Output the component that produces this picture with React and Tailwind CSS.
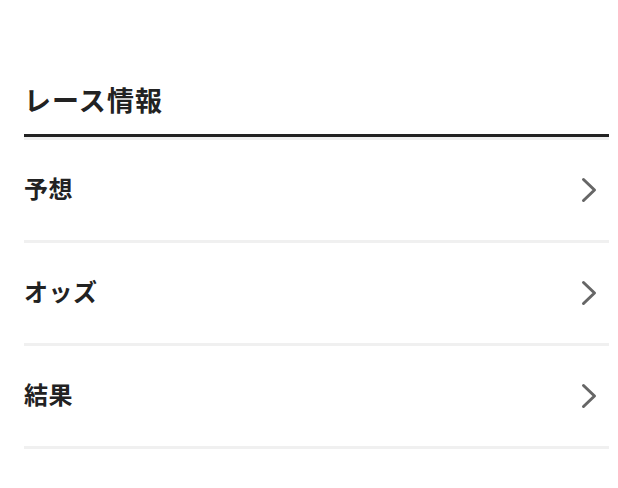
const items = ['予想', 'オッズ', '結果'];

const Chevron = () => (
  <svg width="16" height="26" viewBox="0 0 16 26" fill="none" className="flex-shrink-0">
    <path d="M2.5 2.5 L13.5 13 L2.5 23.5" stroke="#666" strokeWidth="3" strokeLinecap="round" strokeLinejoin="round" />
  </svg>
);

export default function App() {
  return (
    <div className="w-[618px] h-[488px] bg-white pl-6 pr-[9px] pt-20" style={{ fontFamily: '"Noto Sans CJK JP", "Noto Sans", sans-serif' }}>
      {/* Section title */}
      <h2 className="text-[27px] leading-[40px] font-bold text-[#222] tracking-[0.04em] pb-[14px] border-b-[3px] border-[#222]">
        レース情報
      </h2>
      <ul className="border-t-[3px] border-[#f0f0f0]">
        {items.map(label => (
          <li key={label} className="h-[103px] border-b-[3px] border-[#f0f0f0] flex items-center justify-between pr-[12px]">
            <span className="text-[24px] leading-[32px] font-bold text-[#222] tracking-[0.02em] mb-[4px]">{label}</span>
            <Chevron />
          </li>
        ))}
      </ul>
    </div>
  );
}
